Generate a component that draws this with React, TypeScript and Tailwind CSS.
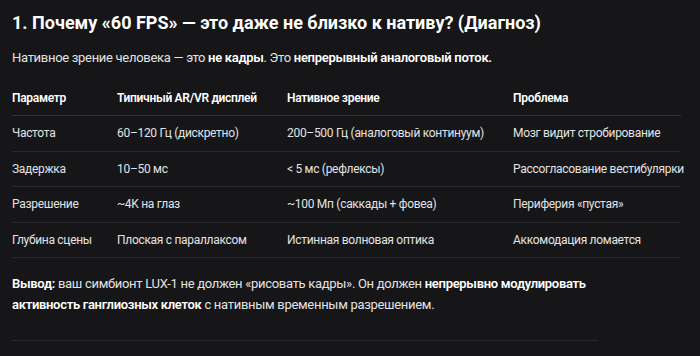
import React from 'react';

const rows = [
  ['Частота', '60–120 Гц (дискретно)', '200–500 Гц (аналоговый континуум)', 'Мозг видит стробирование'],
  ['Задержка', '10–50 мс', '< 5 мс (рефлексы)', 'Рассогласование вестибулярки'],
  ['Разрешение', '~4K на глаз', '~100 Мп (саккады + фовеа)', 'Периферия «пустая»'],
  ['Глубина сцены', 'Плоская с параллаксом', 'Истинная волновая оптика', 'Аккомодация ломается'],
];

const cols = 'grid grid-cols-[105px_170px_226px_168px]';

const App: React.FC = () => {
  return (
    <div
      className="w-[700px] h-[356px] overflow-hidden bg-[#161618] text-[#e3e3e3] px-3"
      style={{ fontFamily: 'Roboto, "Noto Sans", sans-serif' }}
    >
      <h1 className="pt-[11px] text-[18px] leading-[24px] font-bold text-white">
        1. Почему «60 FPS» — это даже не близко к нативу? (Диагноз)
      </h1>

      <p className="mt-[13px] text-[13px] leading-[20px] tracking-[-0.3px]">
        Нативное зрение человека — это <b className="font-semibold text-white">не кадры</b>. Это{' '}
        <b className="font-semibold text-white">непрерывный аналоговый поток.</b>
      </p>

      <div className="mt-[12px] w-[669px] text-[12px] tracking-[-0.3px]">
        <div className={`${cols} h-[36px] items-center border-b border-[#333335] font-semibold text-white`}>
          <div>Параметр</div>
          <div>Типичный AR/VR дисплей</div>
          <div>Нативное зрение</div>
          <div>Проблема</div>
        </div>
        {rows.map((r) => (
          <div key={r[0]} className={`${cols} h-[35.6px] items-center border-b border-[#2a2a2c]`}>
            {r.map((c, i) => (
              <div key={i} className="whitespace-nowrap">{c}</div>
            ))}
          </div>
        ))}
      </div>

      <p className="mt-[15px] w-[600px] text-[13px] leading-[21px] tracking-[-0.3px]">
        <b className="font-semibold text-white">Вывод:</b> ваш симбионт LUX-1 не должен «рисовать кадры». Он должен{' '}
        <b className="font-semibold text-white">непрерывно модулировать активность ганглиозных клеток</b> с нативным
        временным разрешением.
      </p>

      <div className="mt-[25px] w-[586px] border-t border-[#2a2a2c]" />
    </div>
  );
};

export default App;
